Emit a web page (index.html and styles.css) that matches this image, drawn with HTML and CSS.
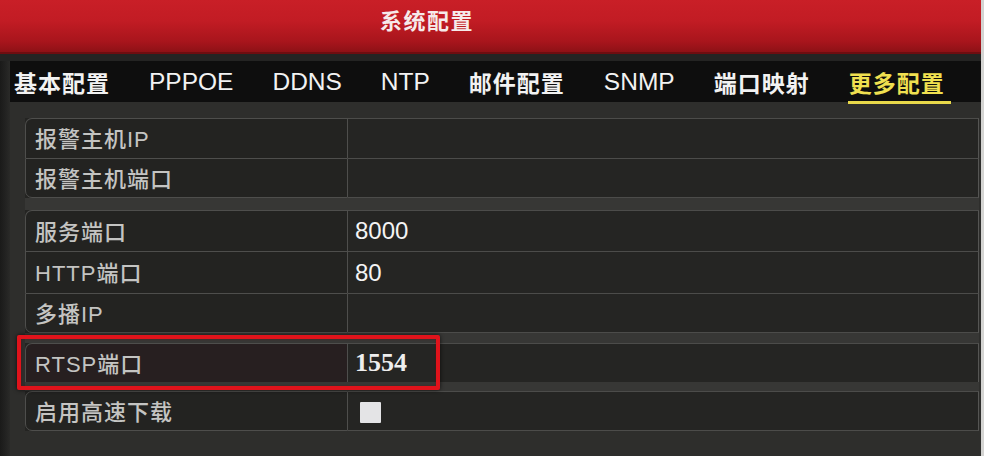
FILE: index.html
```html
<!DOCTYPE html>
<html lang="zh-CN">
<head>
<meta charset="utf-8">
<title>系统配置</title>
<link rel="stylesheet" href="styles.css">
</head>
<body>
<div class="screen">
  <header class="titlebar"><span class="title">系统配置</span></header>
  <div class="body">
    <div class="gutter"></div>
    <div class="panel">
      <nav class="tabs">
        <span class="tab cjk">基本配置</span>
        <span class="tab">PPPOE</span>
        <span class="tab">DDNS</span>
        <span class="tab">NTP</span>
        <span class="tab cjk">邮件配置</span>
        <span class="tab">SNMP</span>
        <span class="tab cjk">端口映射</span>
        <span class="tab cjk active">更多配置</span>
      </nav>
      <div class="table">
        <div class="group g1">
          <div class="row"><div class="label">报警主机IP</div><div class="value"></div></div>
          <div class="row"><div class="label">报警主机端口</div><div class="value"></div></div>
        </div>
        <div class="group g2">
          <div class="row h41"><div class="label">服务端口</div><div class="value">8000</div></div>
          <div class="row h42"><div class="label">HTTP端口</div><div class="value">80</div></div>
          <div class="row"><div class="label">多播IP</div><div class="value"></div></div>
        </div>
        <div class="group g3">
          <div class="row h39"><div class="label">RTSP端口</div><div class="value serif">1554</div></div>
          <div class="highlight"></div>
        </div>
        <div class="group g4">
          <div class="row"><div class="label">启用高速下载</div><div class="value"><span class="checkbox"></span></div></div>
        </div>
      </div>
    </div>
  </div>
</div>
</body>
</html>
```
FILE: styles.css
```css
html, body {
  margin: 0;
  padding: 0;
  background: #2d2d2b;
}
.screen {
  width: 984px;
  height: 456px;
  overflow: hidden;
  box-sizing: border-box;
  border-right: 3px solid #d4d4d2;
  display: flex;
  flex-direction: column;
  font-family: "Liberation Sans", "Noto Sans CJK SC", sans-serif;
}
.titlebar {
  height: 54px;
  flex: none;
  box-sizing: border-box;
  padding-left: 380px;
  padding-top: 5px;
  background: linear-gradient(to bottom, #c91f27 0%, #c21c24 40%, #a8151c 80%, #8e1116 100%);
  border-bottom: 2px solid #6e0d10;
}
.title {
  color: #f6eaea;
  font-family: "Noto Sans CJK SC", sans-serif;
  font-weight: 700;
  font-size: 22px;
  line-height: 28px;
  letter-spacing: 1.5px;
}
.body {
  flex: 1;
  display: flex;
  border-top: 7px solid #242423;
  background: #1c1c1b;
}
.gutter {
  width: 10px;
  flex: none;
  background: linear-gradient(to right, #1a1a19 0%, #232322 60%, #2a2a28 100%);
}
.panel {
  flex: 1;
  background: #2e2e2c;
  display: flex;
  flex-direction: column;
}
.tabs {
  height: 41px;
  flex: none;
  background: #0e0e0e;
  display: flex;
  align-items: center;
  gap: 39px;
  padding-left: 4px;
  padding-top: 1px;
  box-sizing: border-box;
}
.tab {
  color: #f2f2f2;
  font-size: 24.5px;
  line-height: 30px;
  position: relative;
}
.tab.cjk {
  font-family: "Noto Sans CJK SC", sans-serif;
  font-weight: 700;
  font-size: 23px;
  letter-spacing: 1px;
}
.tab.active {
  color: #f0e050;
}
.tab.active::after {
  content: "";
  position: absolute;
  left: -1px;
  right: -6px;
  bottom: -7px;
  height: 3px;
  background: #e8d84a;
}
.table {
  margin: 16px 2px 0 15px;
  background: #373735;
  display: flex;
  flex-direction: column;
}
.group {
  display: flex;
  flex-direction: column;
  background: #242422;
}
.g2 { margin-top: 12px; }
.g3 { margin-top: 10px; position: relative; }
.g4 { margin-top: 9px; }
.row {
  height: 40px;
  display: flex;
}
.row.h39 { height: 39px; }
.row.h41 { height: 41px; }
.row.h42 { height: 42px; }
.label {
  width: 323px;
  flex: none;
  box-sizing: border-box;
  border-left: 1px solid #4e4e4c;
  border-right: 1px solid #4e4e4c;
  border-top: 1px solid #4e4e4c;
  background: #232321;
  color: #c4c4c2;
  font-size: 22px;
  font-weight: 500;
  display: flex;
  align-items: center;
  padding-left: 9px;
  padding-bottom: 3px;
  letter-spacing: 1px;
  font-family: "Liberation Sans", "Noto Sans CJK SC", sans-serif;
}
.value {
  flex: 1;
  box-sizing: border-box;
  border-top: 1px solid #4c4c4a;
  border-right: 1px solid #555553;
  background: #252523;
  color: #f4f4f4;
  font-size: 24px;
  display: flex;
  align-items: center;
  padding-left: 7px;
}
.value.serif {
  font-family: "Liberation Serif", serif;
  font-size: 26px;
  font-weight: 700;
  color: #eeeeee;
}
.row:first-child .label { border-top-left-radius: 7px; }
.row:last-child .label {
  border-bottom: 1px solid #4e4e4c;
  border-bottom-left-radius: 7px;
}
.row:last-child .value { border-bottom: 1px solid #4c4c4a; }
.g3 .label { background: #271f20; }
.highlight {
  position: absolute;
  top: -8px;
  left: -8px;
  width: 423px;
  height: 55px;
  box-sizing: border-box;
  border: 4px solid #e0131b;
  border-radius: 2px;
  box-shadow: 0 0 4px rgba(0, 0, 0, 0.7), inset 0 0 2px rgba(120, 0, 0, 0.5);
}
.checkbox {
  width: 21px;
  height: 21px;
  margin-left: 5px;
  margin-top: 2px;
  background: #e4e4e6;
  border-radius: 1px;
}
```
